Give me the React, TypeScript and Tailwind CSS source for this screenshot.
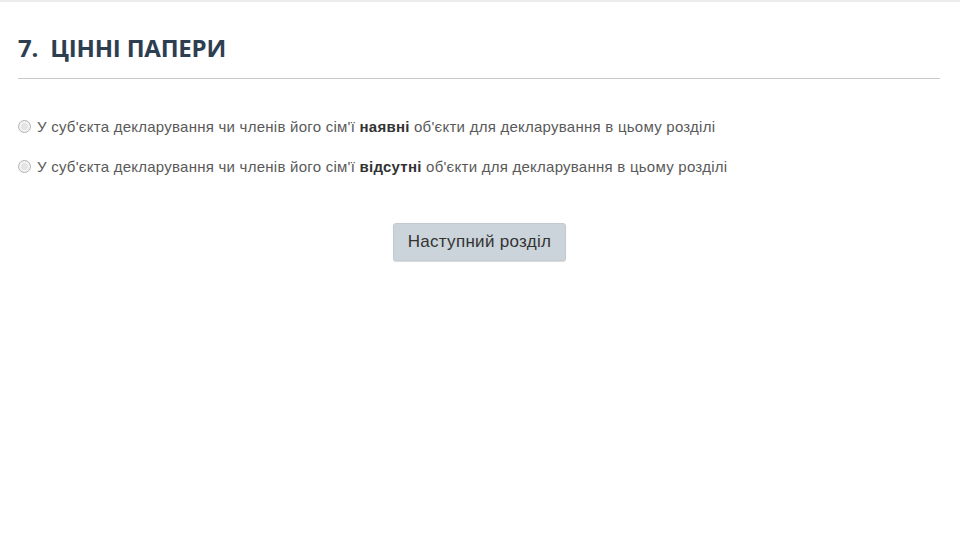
import React from "react";

function Radio() {
  return (
    <span className="inline-block w-[13px] h-[13px] rounded-full border border-[#b5b5b5] bg-[#e4e4e4] shrink-0 shadow-[inset_0_0_0_2px_#f3f3f3]" />
  );
}

export default function App() {
  return (
    <div className="w-[960px] h-[540px] bg-white overflow-hidden" style={{ fontFamily: '"Liberation Sans", Arial, sans-serif' }}>
      <div className="h-[2px] bg-[#ececec]" />
      <div className="px-[18px] pt-[31px]">
        <h1 className="text-[24px] leading-[30px] font-bold text-[#2c3e50] tracking-[-0.2px]" style={{ fontFamily: '"Open Sans", sans-serif' }}>
          7.&nbsp; ЦІННІ ПАПЕРИ
        </h1>
        <div className="mt-[15px] mr-[2px] h-px bg-[#c8c8c8]" />
        <div className="mt-[39px] flex flex-col gap-[23px] text-[15px] leading-[17px] tracking-[0.25px] text-[#5a5a5a]">
          <label className="flex items-center gap-[6px]">
            <Radio />
            <span>У суб'єкта декларування чи членів його сім'ї <b className="text-[#333]">наявні</b> об'єкти для декларування в цьому розділі</span>
          </label>
          <label className="flex items-center gap-[6px]">
            <Radio />
            <span>У суб'єкта декларування чи членів його сім'ї <b className="text-[#333]">відсутні</b> об'єкти для декларування в цьому розділі</span>
          </label>
        </div>
        <div className="mt-[48px] flex justify-center pr-[1px]">
          <button className="w-[173px] h-[38px] rounded-[3px] bg-[#ccd4db] border border-[#c2cad2] text-[17px] tracking-[0.3px] text-[#333] shadow-[0_1px_1px_rgba(0,0,0,0.15)]">
            Наступний розділ
          </button>
        </div>
      </div>
    </div>
  );
}
